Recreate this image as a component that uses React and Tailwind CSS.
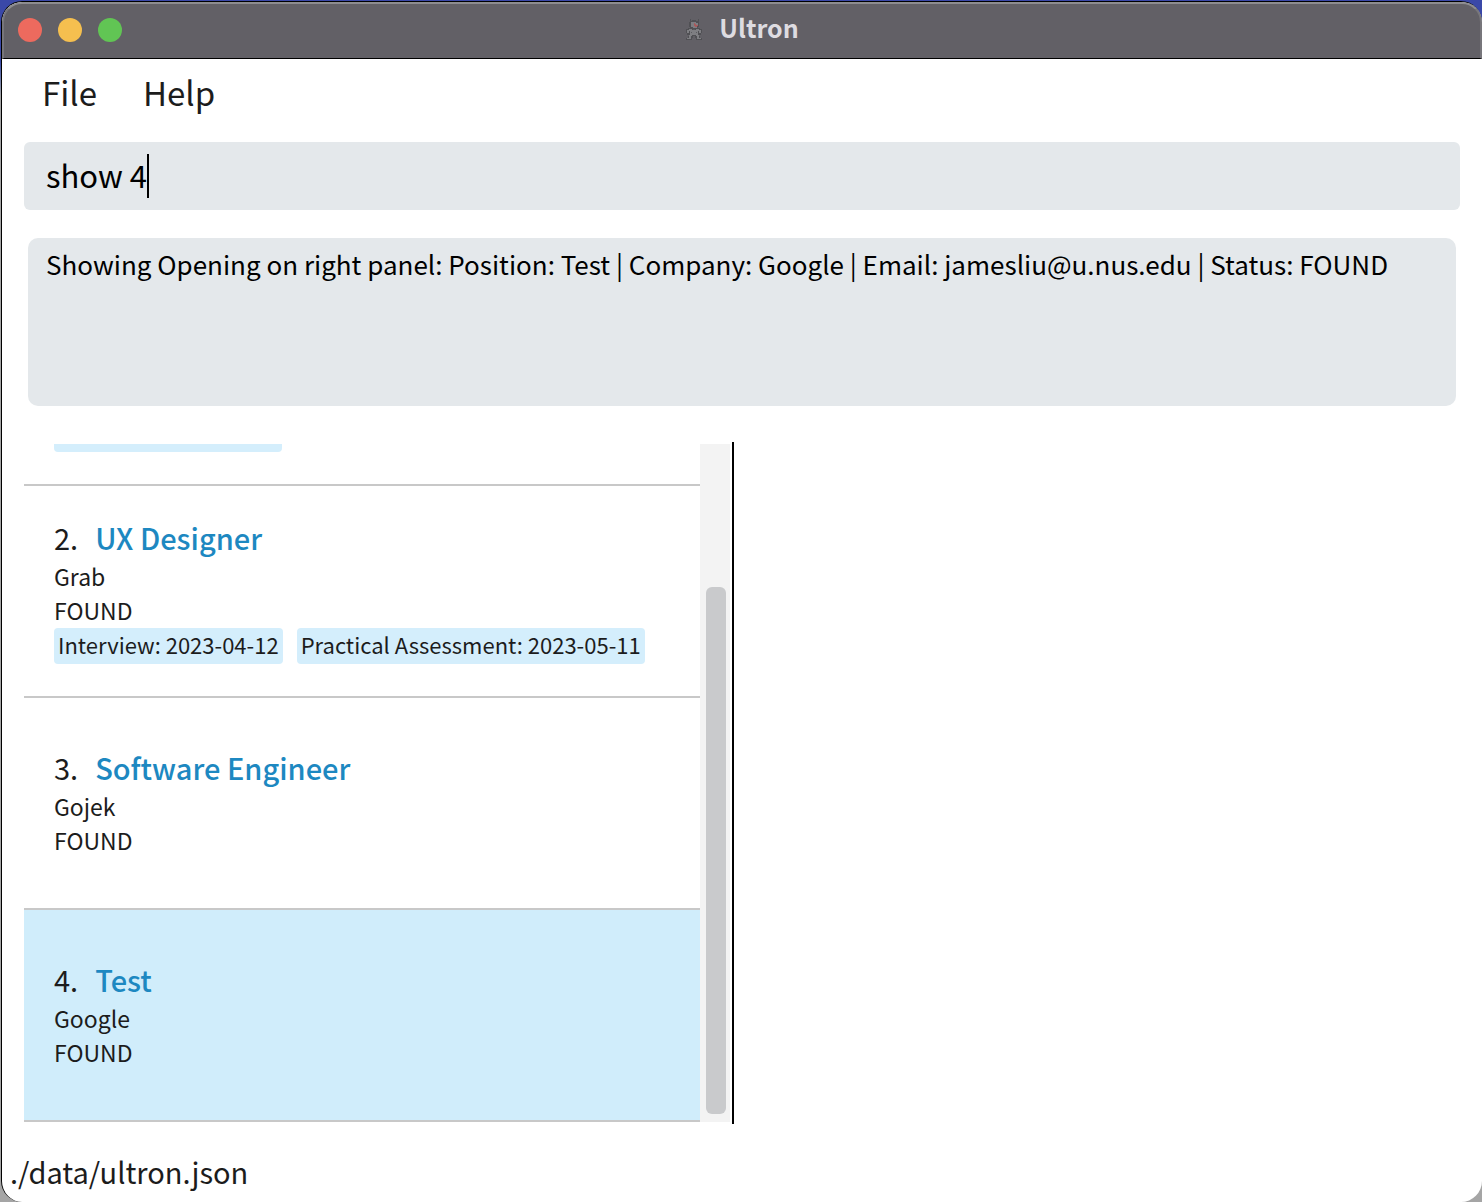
import React from "react";

const openings = [
  {
    id: 2,
    position: "UX Designer",
    company: "Grab",
    status: "FOUND",
    dates: ["Interview: 2023-04-12", "Practical Assessment: 2023-05-11"],
  },
  { id: 3, position: "Software Engineer", company: "Gojek", status: "FOUND", dates: [] },
  { id: 4, position: "Test", company: "Google", status: "FOUND", dates: [], selected: true },
];

function RobotIcon() {
  return (
    <svg viewBox="0 0 18 22" className="h-[22px] w-[18px]" aria-hidden="true">
      <path
        d="M5 0h1v2h1V1h4v1h2V0h1v8h-1v1h2v1h2v4h-1v2h-2v1h1v2h2v2h-6v-2h-1v-2H8v2H7v2H1v-2h2v-2h1v-1H2v-2H1v-4h2V9h2V8H4V3h1z"
        fill="#505054"
      />
      <path
        d="M6 3h5v1h2v3h-1v2H8V8H6zM4 10h3v1h4v-1h3v1h2v3h-2v-2h-1v4h1v3h-2v-2h-1v-1H7v1H6v2H4v-3h1v-4H4v2H2v-3h2zM2 19h4v1H2zM12 19h4v1h-4z"
        fill="#7e7e82"
      />
      <path d="M6 13h1v1H6zM11 13h1v1h-1zM8 10h2v1H8z" fill="#5b5b5f" />
      <path d="M9 4h1v1h1v1h2v1h-1v1h-2V7H9z" fill="#a85a5c" />
    </svg>
  );
}

function TitleBar() {
  return (
    <header className="flex h-[57px] items-center rounded-t-[20px] border-x-2 border-t-2 border-b border-x-[#77767b] border-t-[#8d8c90] border-b-black bg-[#626066] px-3.5 pb-0.5">
      <div className="flex flex-1 gap-4">
        <button aria-label="Close" className="size-6 rounded-full bg-[#ed6a5e]" />
        <button aria-label="Minimize" className="size-6 rounded-full bg-[#f5bf4f]" />
        <button aria-label="Zoom" className="size-6 rounded-full bg-[#61c554]" />
      </div>
      <h1 className="flex items-center gap-4 text-[25px] leading-8 font-bold text-[#dedce1]">
        <RobotIcon />
        <span className="pb-1.5">Ultron</span>
      </h1>
      <div className="flex-1" />
    </header>
  );
}

function DateTag({ children }) {
  return (
    <li className="rounded-sm bg-[#d4eefc] px-1 pb-1 text-[22px] leading-8 whitespace-nowrap">{children}</li>
  );
}

function OpeningCard({ opening }) {
  return (
    <li
      className={
        "flex h-[212px] shrink-0 flex-col justify-center border-b-2 border-[#c8c8c8] px-[30px] " +
        (opening.selected ? "bg-[#d0edfb]" : "bg-white")
      }
    >
      <h2 className="flex gap-[17px] pb-1 text-[29px] leading-[38px]">
        <span>{opening.id}.</span>
        <span className="font-medium text-[#1d88c1]">{opening.position}</span>
      </h2>
      <p className="pb-0.5 text-[23px] leading-8">{opening.company}</p>
      <p className="pb-0.5 text-[23px] leading-8">{opening.status}</p>
      {opening.dates.length > 0 && (
        <ul className="flex gap-3.5">
          {opening.dates.map((date) => (
            <DateTag key={date}>{date}</DateTag>
          ))}
        </ul>
      )}
    </li>
  );
}

export default function App() {
  return (
    <div className="flex min-h-screen flex-col bg-linear-to-b from-[#3a48a8] from-5% to-[#a5a5a5] to-8% pt-px pl-px font-['Noto_Sans_CJK_SC',sans-serif] text-[#1c1c1c]">
      <div className="flex flex-1 flex-col rounded-[21px] border-t border-l border-black bg-white">
        <TitleBar />

        <nav className="flex h-[83px] items-center gap-[46px] px-10 pb-4 text-[33px]">
          <button>File</button>
          <button>Help</button>
        </nav>

        <main className="flex flex-1 flex-col px-[22px]">
          <div className="flex h-[68px] items-center rounded-md bg-[#e4e8eb] px-[22px] text-black">
            <input
              aria-label="Command"
              defaultValue="show 4"
              className="field-sizing-content pb-0.5 text-[31px] outline-none"
            />
            <span className="h-11 w-0.5 bg-black" />
          </div>

          <textarea
            readOnly
            aria-label="Result"
            className="mx-1 mt-7 h-[168px] resize-none rounded-[10px] bg-[#e4e8eb] px-[18px] py-1.5 text-[26px] leading-10 text-black outline-none"
            defaultValue="Showing Opening on right panel: Position: Test | Company: Google | Email: jamesliu@u.nus.edu | Status: FOUND"
          />

          <div className="mt-9 grid flex-1 grid-cols-[118fr_2px_121fr]">
            <section className="flex py-0.5 pr-0.5">
              <ul className="flex min-w-0 flex-1 flex-col justify-end">
                <li className="flex-1 border-b-2 border-[#c8c8c8] px-[30px] pb-8">
                  <div className="h-2 w-[228px] rounded-b-sm bg-[#d4eefc]" />
                </li>
                {openings.map((opening) => (
                  <OpeningCard key={opening.id} opening={opening} />
                ))}
              </ul>
              <div className="flex w-[30px] flex-col justify-end bg-[#f3f3f3] pr-1 pb-2 pl-1.5">
                <div className="h-[527px] rounded-md bg-[#c9cacc]" />
              </div>
            </section>
            <div className="bg-black" />
            <section aria-label="Details" />
          </div>
        </main>

        <footer className="h-[78px] px-2 pt-6 text-[29px] leading-[46px]">./data/ultron.json</footer>
      </div>
    </div>
  );
}
